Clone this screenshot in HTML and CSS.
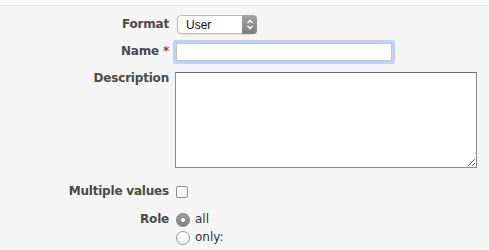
FILE: index.html
```html
<!DOCTYPE html>
<html lang="en">
<head>
    <meta charset="UTF-8">
    <title>Custom field</title>
    <link rel="stylesheet" href="styles.css">
</head>
<body>
    <div class="topbar"></div>
    <form class="field-form">
        <div class="row row-format">
            <label class="row-label" for="format">Format</label>
            <div class="select-wrap">
                <select id="format" class="select">
                    <option>User</option>
                </select>
                <span class="select-arrow">
                    <svg width="8" height="11" viewBox="0 0 8 11">
                        <path d="M1.5 4 L4 1.5 L6.5 4 M1.5 7 L4 9.5 L6.5 7" fill="none" stroke="#fff" stroke-width="1.3"/>
                    </svg>
                </span>
            </div>
        </div>
        <div class="row row-name">
            <label class="row-label" for="name">Name <span class="required">*</span></label>
            <input type="text" id="name" class="text-input">
        </div>
        <div class="row row-desc">
            <label class="row-label" for="description">Description</label>
            <textarea id="description" class="textarea"></textarea>
        </div>
        <div class="row row-multi">
            <label class="row-label" for="multiple">Multiple values</label>
            <input type="checkbox" id="multiple" class="checkbox">
        </div>
        <div class="row row-role">
            <span class="row-label">Role</span>
            <div class="options">
                <label class="option"><input type="radio" name="role" class="radio" checked> all</label>
                <label class="option"><input type="radio" name="role" class="radio"> only:</label>
            </div>
        </div>
    </form>
</body>
</html>
```

FILE: styles.css
```css
body {
    margin: 0;
    background-color: #f5f5f5;
    font-family: "DejaVu Sans", Verdana, sans-serif;
    font-size: 12px;
    color: #4a4a4a;
    overflow: hidden;
}
.topbar {
    height: 5px;
    background-color: #fff;
    border-bottom: 1px solid #e1e1e1;
}
.row {
    display: flex;
    align-items: flex-start;
}
.row-label {
    width: 169px;
    margin-right: 6px;
    flex-shrink: 0;
    text-align: right;
    font-weight: bold;
    line-height: 14px;
    letter-spacing: -0.2px;
}
.required {
    color: #a63c10;
}
.row-format {
    margin-top: 9px;
}
.row-format .row-label {
    margin-top: 2px;
}
.select-wrap {
    position: relative;
    margin-left: 2px;
}
.select {
    display: block;
    width: 80px;
    height: 19px;
    margin: 0;
    padding: 0 0 0 8px;
    appearance: none;
    -webkit-appearance: none;
    background-color: #fff;
    border: 1px solid #b9b9b9;
    border-radius: 4px;
    box-shadow: 0 1px 1px rgba(0, 0, 0, 0.08);
    font-family: "Liberation Sans", Arial, sans-serif;
    font-size: 12px;
    color: #111;
}
.select-arrow {
    position: absolute;
    top: 0;
    right: 0;
    width: 15px;
    height: 19px;
    display: flex;
    align-items: center;
    justify-content: center;
    background: linear-gradient(#a4a4a4, #7e7e7e);
    border-radius: 0 4px 4px 0;
}
.row-name {
    margin-top: 9px;
}
.row-name .row-label {
    margin-top: 1px;
}
.text-input {
    box-sizing: border-box;
    width: 216px;
    height: 18px;
    margin: 0 0 0 1px;
    padding: 0 3px;
    border: 1px solid #c4c4c4;
    background-color: #fff;
    box-shadow: 0 0 0 3px #bdd4f7;
    border-radius: 1px;
    outline: none;
}
.row-desc {
    margin-top: 11px;
}
.row-desc .row-label {
    margin-top: -1px;
}
.textarea {
    box-sizing: border-box;
    width: 302px;
    height: 96px;
    margin: 0;
    padding: 2px;
    border: 1px solid #8c8c8c;
    border-top-color: #6e6e6e;
    background-color: #fff;
    font-family: "DejaVu Sans", Verdana, sans-serif;
    font-size: 12px;
}
.row-multi {
    margin-top: 16px;
}
.checkbox {
    appearance: none;
    -webkit-appearance: none;
    box-sizing: border-box;
    width: 12px;
    height: 12px;
    margin: 2px 0 0 1px;
    border: 1px solid #8f8f8f;
    border-radius: 2px;
    background: linear-gradient(#fff, #f2f2f2);
}
.row-role {
    margin-top: 12px;
}
.row-role .row-label {
    line-height: 18px;
}
.options {
    display: flex;
    flex-direction: column;
    margin-left: 1px;
}
.option {
    display: flex;
    align-items: flex-start;
    gap: 5px;
    line-height: 18px;
    color: #333;
}
.radio {
    appearance: none;
    -webkit-appearance: none;
    box-sizing: border-box;
    width: 14px;
    height: 14px;
    margin: 3px 0 0 0;
    border: 1px solid #989898;
    border-radius: 50%;
    background: linear-gradient(#fff, #f0f0f0);
}
.radio:checked {
    border-color: #7c7c7c;
    background: radial-gradient(circle, #fff 0, #fff 1.6px, transparent 2.2px), linear-gradient(#9c9c9c, #828282);
}
```
